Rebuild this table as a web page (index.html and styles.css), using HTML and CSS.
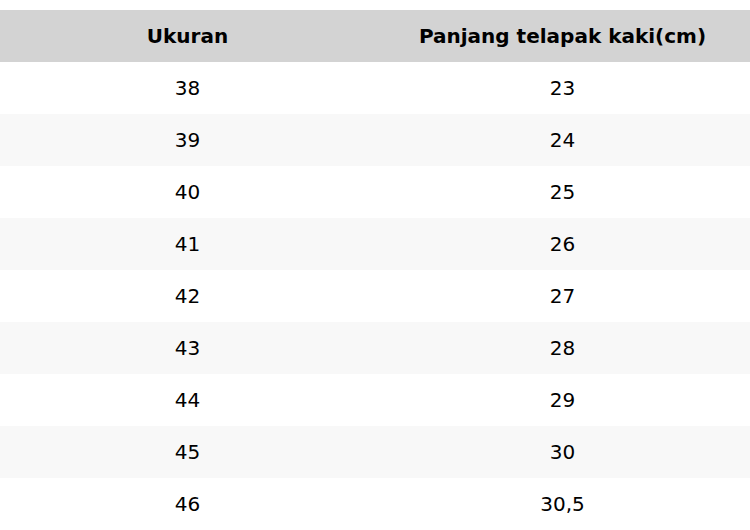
FILE: index.html
```html
<!DOCTYPE html>
<html>
<head>
<meta charset="utf-8">
<link rel="stylesheet" href="styles.css">
</head>
<body>
<table class="size-table">
  <thead>
    <tr><th>Ukuran</th><th>Panjang telapak kaki(cm)</th></tr>
  </thead>
  <tbody>
    <tr><td>38</td><td>23</td></tr>
    <tr><td>39</td><td>24</td></tr>
    <tr><td>40</td><td>25</td></tr>
    <tr><td>41</td><td>26</td></tr>
    <tr><td>42</td><td>27</td></tr>
    <tr><td>43</td><td>28</td></tr>
    <tr><td>44</td><td>29</td></tr>
    <tr><td>45</td><td>30</td></tr>
    <tr><td>46</td><td>30,5</td></tr>
  </tbody>
</table>
</body>
</html>
```
FILE: styles.css
```css
html, body {
  margin: 0;
  padding: 0;
  background: #ffffff;
}
body {
  padding-top: 10px;
  font-family: "DejaVu Sans", sans-serif;
  font-size: 20px;
  color: #000000;
}
.size-table {
  width: 750px;
  border-collapse: collapse;
  table-layout: fixed;
}
.size-table th,
.size-table td {
  height: 52px;
  padding: 0;
  text-align: center;
  vertical-align: middle;
}
.size-table th {
  background: #d3d3d3;
  font-weight: bold;
}
.size-table tbody tr:nth-child(even) td {
  background: #f8f8f8;
}
```
